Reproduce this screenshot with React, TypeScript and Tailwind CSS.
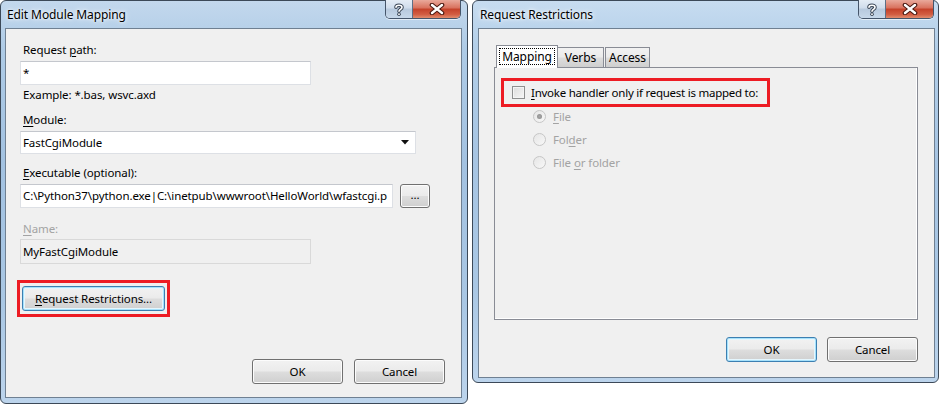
import React from "react";

const FONT = "[font-family:'Segoe_UI','Noto_Sans',sans-serif]";

function TitleButtons() {
  return (
    <div className="flex h-[19px] overflow-hidden rounded-b-[5px] border border-t-0 border-[#45556a] shadow-[0_1px_0_rgba(255,255,255,0.6)]">
      <div className="flex w-[27px] items-center justify-center border-r border-[#5d6f86] bg-[linear-gradient(180deg,#e4ecf5_0%,#cfdceb_45%,#b7c9dd_50%,#c7d8ea_100%)]">
        <svg width="10" height="13" viewBox="0 0 10 13">
          <path d="M2 4.2 C2 1.5 8 1.5 8 4.2 C8 6.3 5 6.3 5 8.3" fill="none" stroke="#3a4656" strokeWidth="3.6" strokeLinecap="round" />
          <circle cx="5" cy="11.2" r="1.8" fill="#3a4656" />
          <path d="M2 4.2 C2 1.5 8 1.5 8 4.2 C8 6.3 5 6.3 5 8.3" fill="none" stroke="#ffffff" strokeWidth="1.6" strokeLinecap="round" />
          <circle cx="5" cy="11.2" r="0.9" fill="#ffffff" />
        </svg>
      </div>
      <div className="flex w-[47px] items-center justify-center bg-[linear-gradient(180deg,#e9a99b_0%,#d8705c_45%,#c4412a_50%,#d25d42_80%,#e08c6e_100%)]">
        <svg width="16" height="12" viewBox="0 0 16 12">
          <path d="M3 2 L13 10 M13 2 L3 10" stroke="#4b1a12" strokeWidth="4.6" strokeLinecap="round" />
          <path d="M3 2 L13 10 M13 2 L3 10" stroke="#ffffff" strokeWidth="2.4" strokeLinecap="round" />
        </svg>
      </div>
    </div>
  );
}

function WinButton({
  children,
  focused = false,
  className = "",
}: {
  children: React.ReactNode;
  focused?: boolean;
  className?: string;
}) {
  return (
    <div
      className={`flex items-center justify-center rounded-[3px] border text-black ${
        focused
          ? "border-[#3c7fb1] shadow-[inset_0_0_0_1px_#a6e1fb,inset_0_0_0_2px_#e5f6fd]"
          : "border-[#707070] shadow-[inset_0_0_0_1px_#fcfcfc]"
      } bg-[linear-gradient(180deg,#f2f2f2_0%,#ebebeb_48%,#dddddd_52%,#cfcfcf_100%)] ${className}`}
    >
      {children}
    </div>
  );
}

function TextBox({ children, className = "", disabled = false }: { children?: React.ReactNode; className?: string; disabled?: boolean }) {
  return (
    <div
      className={`flex items-center overflow-hidden whitespace-nowrap border pl-[2px] ${
        disabled ? "border-[#d9d9d9] bg-[#f0f0f0]" : "border-[#dde0e5] border-t-[#c4c7cd] bg-white"
      } ${className}`}
    >
      {children}
    </div>
  );
}

function U({ children }: { children: React.ReactNode }) {
  return <span className="underline decoration-1 underline-offset-[2px]">{children}</span>;
}

function Radio({ checked = false }: { checked?: boolean }) {
  return (
    <div className="flex h-[13px] w-[13px] items-center justify-center rounded-full border border-[#c6c6c6] bg-[linear-gradient(135deg,#e6e6e6_0%,#f7f7f7_100%)]">
      {checked && <div className="h-[5px] w-[5px] rounded-full bg-[radial-gradient(circle,#a8a8a8_0%,#8a8a8a_100%)]" />}
    </div>
  );
}

export default function App() {
  return (
    <div className={`flex h-[406px] w-[939px] items-start gap-[4px] overflow-hidden bg-white text-[11.5px] leading-[16px] tracking-[-0.1px] text-black ${FONT}`}>
      {/* Left dialog */}
      <div className="flex h-[404px] w-[468px] flex-col rounded-[6px] border border-[#3c4958] bg-[linear-gradient(180deg,#c3d8ed_0%,#aecbe6_12%,#a3c2e1_40%,#a9c7e4_75%,#bcd4ec_100%)] pb-[5px] pl-[4px] pr-[5px]">
        <div className="flex h-[27px] items-start justify-between">
          <div className="pl-[2px] pt-[6px] text-[12px] [text-shadow:0_0_6px_#ffffff,0_0_3px_#ffffff]">Edit Module Mapping</div>
          <div className="-mt-px pr-px">
            <TitleButtons />
          </div>
        </div>
        <div className="flex flex-1 flex-col border border-[#6f8092] bg-[#f0f0f0] pl-[14px] pr-[16px] pt-[13px]">
          <div className="pl-[3px]">
            Request <U>p</U>ath:
          </div>
          <TextBox className="mt-[3px] h-[24px] w-[291px]">*</TextBox>
          <div className="mt-[2px] pl-[3px]">Example: *.bas, wsvc.axd</div>
          <div className="mt-[9px] pl-[3px]">
            <U>M</U>odule:
          </div>
          <TextBox className="mt-[3px] h-[23px] w-[396px] justify-between pr-[6px]">
            <span>FastCgiModule</span>
            <svg width="8" height="5" viewBox="0 0 8 5">
              <path d="M0 0 H8 L4 4.5 Z" fill="#111" />
            </svg>
          </TextBox>
          <div className="mt-[11px] pl-[3px]">
            <U>E</U>xecutable (optional):
          </div>
          <div className="mt-[3px] flex items-start gap-[7px]">
            <TextBox className="h-[24px] w-[373px]">C:\Python37\python.exe|C:\inetpub\wwwroot\HelloWorld\wfastcgi.p</TextBox>
            <WinButton className="h-[24px] w-[30px] pb-[3px]">...</WinButton>
          </div>
          <div className="mt-[13px] pl-[3px] text-[#a3a3a3]">
            <U>N</U>ame:
          </div>
          <TextBox disabled className="mt-[2px] h-[25px] w-[291px]">
            MyFastCgiModule
          </TextBox>
          <div className="-ml-[3px] mt-[16px] flex h-[37px] w-[153px] items-center justify-center border-[3px] border-[#ed1c24]">
            <WinButton focused className="h-[25px] w-[143px]">
              <span>
                <U>R</U>equest Restrictions...
              </span>
            </WinButton>
          </div>
          <div className="mt-[42px] flex justify-end gap-[11px]">
            <WinButton className="h-[25px] w-[91px]">OK</WinButton>
            <WinButton className="h-[25px] w-[91px]">Cancel</WinButton>
          </div>
        </div>
      </div>

      {/* Right dialog */}
      <div className="flex h-[383px] w-[467px] flex-col rounded-[6px] border border-[#3c4958] bg-[linear-gradient(180deg,#c7dcf0_0%,#b3cfe9_12%,#a7c5e3_40%,#a9c7e4_75%,#bcd4ec_100%)] pb-[4px] pl-[5px] pr-[3px]">
        <div className="flex h-[27px] items-start justify-between">
          <div className="pl-[2px] pt-[6px] text-[12px] [text-shadow:0_0_6px_#ffffff,0_0_3px_#ffffff]">Request Restrictions</div>
          <div className="-mt-px pr-px">
            <TitleButtons />
          </div>
        </div>
        <div className="flex flex-1 flex-col border border-[#6f8092] bg-[#f0f0f0] pl-[15px] pr-[16px] pt-[16px]">
          <div className="flex items-end pl-[2px]">
            <div className="relative z-10 -mb-px flex h-[23px] w-[62px] items-start justify-center border border-b-0 border-[#898c95] bg-white pt-[2px]">
              <span className="border border-dotted border-black px-[2px] text-[12px] leading-[15px]">Mapping</span>
            </div>
            <div className="-ml-px flex h-[20px] w-[47px] items-center justify-center border border-b-0 border-[#898c95] bg-[linear-gradient(180deg,#f2f2f2_0%,#ebebeb_48%,#dddddd_52%,#cfcfcf_100%)] text-[12px]">
              Verbs
            </div>
            <div className="ml-[1px] flex h-[20px] w-[45px] items-center justify-center border border-b-0 border-[#898c95] bg-[linear-gradient(180deg,#f2f2f2_0%,#ebebeb_48%,#dddddd_52%,#cfcfcf_100%)] text-[12px]">
              Access
            </div>
          </div>
          <div className="flex h-[253px] w-[424px] flex-col border border-[#898c95] bg-[#f0f0f0] pl-[6px] pt-[10px] shadow-[inset_-1px_-1px_0_#ffffff]">
            <div className="flex h-[29px] w-[269px] items-center whitespace-nowrap border-[3px] border-[#ed1c24] pl-[8px]">
              <div className="h-[13px] w-[13px] shrink-0 border border-[#8e8f8f] bg-[linear-gradient(135deg,#dcdcdc_0%,#f6f6f6_100%)] shadow-[inset_0_0_0_1px_#f4f4f4]" />
              <span className="ml-[6px] whitespace-nowrap tracking-[-0.25px]">
                <U>I</U>nvoke handler only if request is mapped to:
              </span>
            </div>
            <div className="mt-[-2px] flex flex-col pl-[32px] text-[#a3a3a3]">
              <div className="flex h-[23px] items-center gap-[7px]">
                <Radio checked />
                <span>
                  <U>F</U>ile
                </span>
              </div>
              <div className="flex h-[23px] items-center gap-[7px]">
                <Radio />
                <span>
                  Fol<U>d</U>er
                </span>
              </div>
              <div className="flex h-[23px] items-center gap-[7px]">
                <Radio />
                <span>
                  File <U>o</U>r folder
                </span>
              </div>
            </div>
          </div>
          <div className="mt-[17px] flex justify-end gap-[10px]">
            <WinButton focused className="h-[25px] w-[91px]">OK</WinButton>
            <WinButton className="h-[25px] w-[91px]">Cancel</WinButton>
          </div>
        </div>
      </div>
    </div>
  );
}
